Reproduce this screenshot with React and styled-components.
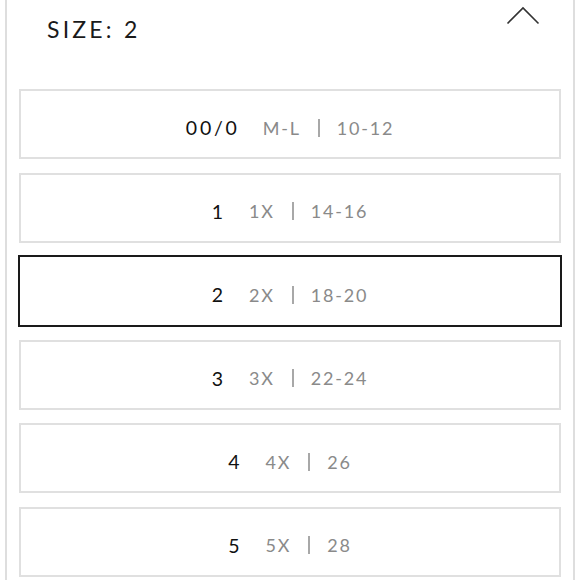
import React from "react";
import styled, { createGlobalStyle } from "styled-components";

const Global = createGlobalStyle`
  *, *::before, *::after { box-sizing: border-box; }
  html, body { margin: 0; padding: 0; background: #fff; }
  body { font-family: "Lato", "Open Sans", sans-serif; }
`;

const Page = styled.div`
  width: 580px;
  height: 580px;
  overflow: hidden;
  background: #fff;
`;

const Panel = styled.div`
  margin-left: 5px;
  width: 570px;
  height: 600px;
  border-left: 2px solid #dedede;
  border-right: 2px solid #dedede;
  padding: 0 12px 0 12px;
`;

const Header = styled.div`
  position: relative;
  height: 89px;
`;

const Title = styled.div`
  padding-top: 14px;
  padding-left: 28px;
  font-size: 23px;
  letter-spacing: 3.2px;
  color: #1a1a1a;
  line-height: 30px;
`;

const Chevron = styled.svg`
  position: absolute;
  right: 21px;
  top: 6px;
`;

const List = styled.div`
  display: flex;
  flex-direction: column;
  gap: 13.5px;
`;

const Row = styled.div`
  height: ${(p) => (p.$selected ? "72px" : "70px")};
  border: 2px solid ${(p) => (p.$selected ? "#1a1a1a" : "#e0e0e0")};
  margin: ${(p) => (p.$selected ? "-1px -1px" : "0")};
  display: flex;
  align-items: center;
  justify-content: center;
  padding-top: 7px;
  font-size: 19.5px;
`;

const Main = styled.span`
  color: #111;
  letter-spacing: 2.8px;
  margin-right: 23px;
`;

const Sub = styled.span`
  color: #8a8a8a;
  font-size: 18px;
  letter-spacing: 1.8px;
`;

const Sep = styled.span`
  display: inline-block;
  flex: 0 0 2px;
  width: 2px;
  height: 18px;
  background: #a8a8a8;
  margin: 0 17px 0 17px;
`;

const sizes = [
  { n: "00/0", a: "M-L", b: "10-12" },
  { n: "1", a: "1X", b: "14-16" },
  { n: "2", a: "2X", b: "18-20", sel: true },
  { n: "3", a: "3X", b: "22-24" },
  { n: "4", a: "4X", b: "26" },
  { n: "5", a: "5X", b: "28" },
];

export default function App() {
  return (
    <Page>
      <Global />
      <Panel>
        <Header>
          <Title>SIZE: 2</Title>
          <Chevron width="34" height="20" viewBox="0 0 34 20">
            <polyline points="1.5,17.5 17,2 32.5,17.5" fill="none" stroke="#333" strokeWidth="1.6" />
          </Chevron>
        </Header>
        <List>
          {sizes.map((s) => (
            <Row key={s.n} $selected={s.sel}>
              <Main>{s.n}</Main>
              <Sub>{s.a}</Sub>
              <Sep />
              <Sub>{s.b}</Sub>
            </Row>
          ))}
        </List>
      </Panel>
    </Page>
  );
}
